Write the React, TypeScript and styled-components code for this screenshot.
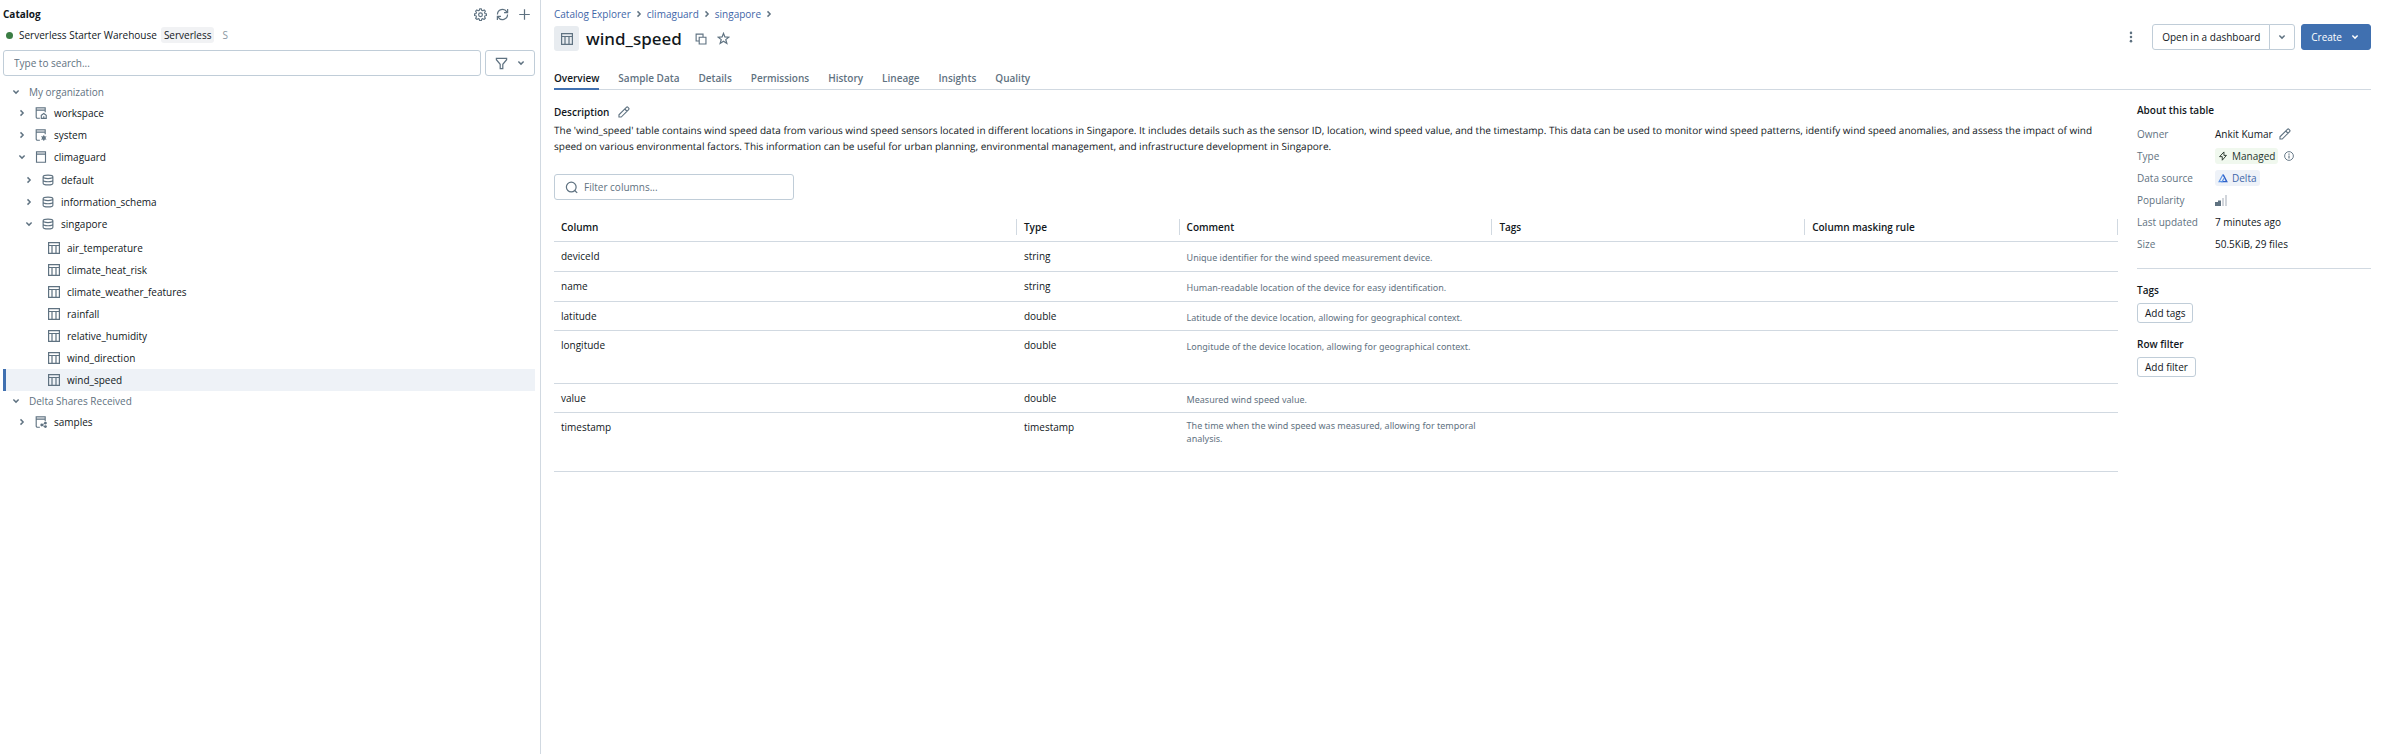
import React from "react";
import styled, { createGlobalStyle } from "styled-components";

const color = {
  text: "#11171c",
  muted: "#5f7281",
  border: "#d1d9e1",
  control: "#c0cdd8",
  blue: "#4070b0",
  link: "#3f66a8",
  selected: "#eef2f7",
};

const GlobalStyle = createGlobalStyle`
  * { box-sizing: border-box; }
  body {
    margin: 0;
    background: #fff;
    color: ${color.text};
    font: 10px/16px "Open Sans", "Noto Sans", sans-serif;
  }
  button, input { font: inherit; color: inherit; }
  ul { list-style: none; margin: 0; padding: 0; }
  h1, h2, p, dl, dd { margin: 0; }
`;

/* ---------- icons ---------- */

const Svg = styled.svg<{ $size?: number }>`
  width: ${(p) => p.$size ?? 12}px;
  height: ${(p) => p.$size ?? 12}px;
  flex: none;
  display: block;
  fill: none;
  stroke: currentColor;
  stroke-width: 1.5;
`;

type IconProps = { size?: number };

const ChevronDown = ({ size = 12 }: IconProps) => (
  <Svg $size={size} viewBox="0 0 16 16" aria-hidden="true">
    <path d="M4.500 6L8 9.500 11.500 6" strokeWidth="1.900" />
  </Svg>
);
const ChevronRight = ({ size = 12 }: IconProps) => (
  <Svg $size={size} viewBox="0 0 16 16" aria-hidden="true">
    <path d="M6 4.500L9.500 8 6 11.500" strokeWidth="1.900" />
  </Svg>
);
const TableIcon = ({ size = 12 }: IconProps) => (
  <Svg $size={size} viewBox="0 0 12 12" aria-hidden="true">
    <path d="M.6.6h10.800v10.800H.6zM.6 3.500h10.800M4 3.500v8M8 3.500v8" strokeWidth="1.200" />
  </Svg>
);
const SchemaIcon = () => (
  <Svg viewBox="0 0 16 16" aria-hidden="true">
    <path d="M1.500 3.800C1.500 2.500 4.400 1.500 8 1.500s6.500 1 6.500 2.300S11.600 6.100 8 6.100 1.500 5.100 1.500 3.800zM1.500 3.800v8.400c0 1.300 2.900 2.300 6.500 2.300s6.500-1 6.500-2.300V3.800M1.500 8c0 1.300 2.900 2.300 6.500 2.300s6.500-1 6.500-2.300" />
  </Svg>
);
const CatalogIcon = () => (
  <Svg viewBox="0 0 16 16" aria-hidden="true">
    <path d="M2.200 2.900h11.600" strokeWidth="2.400" opacity=".35" />
    <path d="M2 1h12v14H2zM2 4.400h12" />
  </Svg>
);
const CatalogOutline = () => (
  <>
    <path d="M1.800 2.900h11.600" strokeWidth="2.400" opacity=".35" />
    <path d="M6.500 15H3.300c-1 0-1.700-.7-1.700-1.700V1h12v6M1.600 4.400h12" />
  </>
);
const CatalogHomeIcon = () => (
  <Svg viewBox="0 0 16 16" aria-hidden="true">
    <CatalogOutline />
    <path d="M8.400 15.200v-4.100l3.300-2.500 3.300 2.500v4.100zM11.700 15v-2.600" />
  </Svg>
);
const CatalogGearIcon = () => (
  <Svg viewBox="0 0 16 16" aria-hidden="true">
    <CatalogOutline />
    <circle cx="11.700" cy="12" r="1.900" />
    <path d="M11.700 8.200v7.600M8.400 10.100l6.600 3.800M8.400 13.900l6.600-3.800" strokeWidth="1.200" />
  </Svg>
);
const CatalogShareIcon = () => (
  <Svg viewBox="0 0 16 16" aria-hidden="true">
    <CatalogOutline />
    <path d="M13.800 9.500L9 12.100l4.800 2.600" strokeWidth="1.200" />
    <g fill="currentColor" strokeWidth="0">
      <circle cx="13.900" cy="9.400" r="1.900" />
      <circle cx="9" cy="12" r="1.900" />
      <circle cx="13.900" cy="14.100" r="1.900" />
    </g>
  </Svg>
);
const GearIcon = () => (
  <Svg $size={13} viewBox="0 0 16 16" aria-hidden="true">
    <path
      strokeLinejoin="round"
      strokeWidth="1.400"
      d="M6.900 1h2.200l.4 1.900 1.300.5 1.700-1 1.500 1.500-1 1.700.5 1.300 1.900.4v1.900l-1.900.4-.5 1.300 1 1.700-1.500 1.500-1.700-1-1.300.5-.4 1.900H6.900l-.4-1.900-1.300-.5-1.700 1L2 12.600l1-1.700-.5-1.300-1.900-.4V7.300l1.900-.4L3 5.600 2 3.900l1.500-1.500 1.700 1 1.300-.5z"
    />
    <circle cx="8" cy="8.200" r="2.300" />
  </Svg>
);
const RefreshIcon = () => (
  <Svg $size={13} viewBox="0 0 16 16" aria-hidden="true">
    <path d="M1.800 8a6.200 6.200 0 0 1 11.500-3.300L14 5.700M14.300 1.300v4.400H9.900M14.200 8a6.200 6.200 0 0 1-11.500 3.300L2 10.300M1.700 14.700v-4.400h4.400" />
  </Svg>
);
const PlusIcon = () => (
  <Svg $size={13} viewBox="0 0 16 16" aria-hidden="true">
    <path d="M8 1.500v13M1.500 8h13" />
  </Svg>
);
const FilterIcon = () => (
  <Svg $size={13} viewBox="0 0 16 16" aria-hidden="true">
    <path d="M1.700 1.700h12.600v1.700L9.600 9v5.300H6.400V9L1.700 3.400z" />
  </Svg>
);
const CopyIcon = () => (
  <Svg viewBox="0 0 16 16" aria-hidden="true">
    <path d="M5.600 10.700H1.500V1.500h9.200v4.100M5.600 5.600h9v9h-9z" />
  </Svg>
);
const StarIcon = () => (
  <Svg $size={13} viewBox="0 0 16 16" aria-hidden="true">
    <path d="M8 1.700l1.700 4.400 4.900.3-3.800 3 1.300 4.700L8 11.400l-4.100 2.700 1.300-4.700-3.800-3 4.900-.3z" />
  </Svg>
);
const PencilIcon = () => (
  <Svg viewBox="0 0 16 16" aria-hidden="true">
    <path d="M1.300 14.700v-3L11.200 1.800a1.500 1.500 0 0 1 2.100 0l.9.900a1.500 1.500 0 0 1 0 2.100L4.300 14.700zM9 4l3 3" />
  </Svg>
);
const SearchIcon = () => (
  <Svg $size={13} viewBox="0 0 16 16" aria-hidden="true">
    <circle cx="7.700" cy="7.500" r="6" />
    <path d="M12 11.700l3 3" />
  </Svg>
);
const KebabIcon = () => (
  <Svg viewBox="0 0 16 16" aria-hidden="true">
    <g fill="currentColor" strokeWidth="0">
      <circle cx="8" cy="2.500" r="1.700" />
      <circle cx="8" cy="8" r="1.700" />
      <circle cx="8" cy="13.500" r="1.700" />
    </g>
  </Svg>
);
const BoltIcon = () => (
  <Svg $size={10} viewBox="0 0 16 16" aria-hidden="true">
    <path d="M9.500 1.500L2.500 9h4.300v5.700L13.500 7H9.500z" strokeLinejoin="round" />
  </Svg>
);
const InfoIcon = () => (
  <Svg $size={10} viewBox="0 0 16 16" aria-hidden="true">
    <circle cx="8" cy="8" r="7" />
    <path d="M8 7v5M8 4v1.800" strokeWidth="1.800" />
  </Svg>
);
const DeltaIcon = () => (
  <Svg $size={10} viewBox="0 0 16 16" aria-hidden="true">
    <path d="M8.200 2.500L14 13.700H5.200" stroke="#2f62c9" strokeWidth="2.200" />
    <path d="M8 2.500L1.800 13.700h4.900L9.600 8.500" stroke="#5b93e6" strokeWidth="1.900" />
  </Svg>
);
const PopularityIcon = () => (
  <Svg $size={12} viewBox="0 0 12 12" role="img" aria-label="Low popularity">
    <g strokeWidth="0">
      <path d="M0 8h3v4H0zM3 6.500h3V12H3z" fill="#5f7281" />
      <path d="M7 4h2v8H7zM10 1h2v11h-2z" fill="#d1d5db" />
    </g>
  </Svg>
);

/* ---------- shared controls ---------- */

const IconButton = styled.button`
  display: flex;
  align-items: center;
  justify-content: center;
  border: 0;
  padding: 0;
  background: none;
  color: ${color.muted};
  cursor: pointer;
`;

const Button = styled.button<{ $primary?: boolean; $small?: boolean }>`
  display: flex;
  align-items: center;
  gap: 7px;
  height: ${(p) => (p.$small ? 20 : 26)}px;
  padding: 0 ${(p) => (p.$small ? 7 : 9)}px;
  border: 1px solid ${(p) => (p.$primary ? color.blue : color.control)};
  border-radius: 3px;
  background: ${(p) => (p.$primary ? color.blue : "#fff")};
  color: ${(p) => (p.$primary ? "#fff" : color.text)};
  cursor: pointer;
`;

const SplitButton = styled.div`
  display: flex;
  button:first-child { border-radius: 3px 0 0 3px; }
  button:last-child {
    margin-left: -1px;
    padding: 0 6px;
    border-radius: 0 3px 3px 0;
    color: ${color.muted};
  }
`;

const Placeholder = `
  &::placeholder { color: ${color.muted}; opacity: 1; }
`;

/* ---------- sidebar ---------- */

const Page = styled.div`
  display: flex;
  min-height: 100vh;
`;

const Sidebar = styled.aside`
  flex: 0 0 541px;
  border-right: 1px solid ${color.border};
  padding: 6px 5px 0 3px;
`;

const SidebarHeader = styled.header`
  display: flex;
  align-items: center;
  justify-content: space-between;
  padding-right: 4px;
`;

const SidebarTitle = styled.h2`
  font-size: 10px;
  font-weight: 700;
`;

const HeaderActions = styled.div`
  display: flex;
  gap: 9px;
`;

const Warehouse = styled.div`
  display: flex;
  align-items: center;
  gap: 4px;
  margin-top: 5px;
  padding-left: 3px;
`;

const StatusDot = styled.span`
  width: 7px;
  height: 7px;
  margin-right: 2px;
  border-radius: 50%;
  background: #3b7d44;
`;

const WarehouseTag = styled.span`
  padding: 0 3px;
  border-radius: 3px;
  background: #f1f2f4;
`;

const WarehouseSize = styled.span`
  margin-left: 4px;
  color: #8a97a2;
`;

const SearchRow = styled.div`
  display: flex;
  gap: 4px;
  margin-top: 7px;
`;

const SearchInput = styled.input`
  flex: 1;
  height: 26px;
  padding: 0 10px;
  border: 1px solid ${color.control};
  border-radius: 3px;
  outline: none;
  ${Placeholder}
`;

const FilterButton = styled(Button)`
  width: 50px;
  justify-content: space-between;
  color: ${color.muted};
`;

const Tree = styled.nav`
  margin-top: 6px;
`;

const SectionRow = styled.button`
  display: flex;
  align-items: center;
  gap: 7px;
  width: 100%;
  height: 20px;
  padding: 0 0 0 7px;
  border: 0;
  background: none;
  color: ${color.muted};
  text-align: left;
`;

const TreeRow = styled.button<{ $indent: number; $selected?: boolean }>`
  display: flex;
  align-items: center;
  gap: 7px;
  width: 100%;
  height: 22px;
  padding: 0 0 0 ${(p) => p.$indent}px;
  border: 0;
  border-left: 3px solid ${(p) => (p.$selected ? color.blue : "transparent")};
  background: ${(p) => (p.$selected ? color.selected : "none")};
  text-align: left;
  svg { color: ${color.muted}; }
`;

const NestedList = styled.ul`
  padding-top: 1px;
  & & { padding-top: 2px; }
`;

const TABLES = [
  "air_temperature",
  "climate_heat_risk",
  "climate_weather_features",
  "rainfall",
  "relative_humidity",
  "wind_direction",
  "wind_speed",
];

const INDENT = { catalog: 10, schema: 17, table: 42 };

function CatalogTree() {
  return (
    <Tree aria-label="Catalogs">
      <SectionRow><ChevronDown />My organization</SectionRow>
      <ul>
        <li><TreeRow $indent={INDENT.catalog}><ChevronRight /><CatalogHomeIcon />workspace</TreeRow></li>
        <li><TreeRow $indent={INDENT.catalog}><ChevronRight /><CatalogGearIcon />system</TreeRow></li>
        <li>
          <TreeRow $indent={INDENT.catalog}><ChevronDown /><CatalogIcon />climaguard</TreeRow>
          <NestedList>
            <li><TreeRow $indent={INDENT.schema}><ChevronRight /><SchemaIcon />default</TreeRow></li>
            <li><TreeRow $indent={INDENT.schema}><ChevronRight /><SchemaIcon />information_schema</TreeRow></li>
            <li>
              <TreeRow $indent={INDENT.schema}><ChevronDown /><SchemaIcon />singapore</TreeRow>
              <NestedList>
                {TABLES.map((name) => (
                  <li key={name}>
                    <TreeRow $indent={INDENT.table} $selected={name === "wind_speed"}>
                      <TableIcon />{name}
                    </TreeRow>
                  </li>
                ))}
              </NestedList>
            </li>
          </NestedList>
        </li>
      </ul>
      <SectionRow><ChevronDown />Delta Shares Received</SectionRow>
      <ul>
        <li><TreeRow $indent={INDENT.catalog}><ChevronRight /><CatalogShareIcon />samples</TreeRow></li>
      </ul>
    </Tree>
  );
}

/* ---------- main area ---------- */

const Main = styled.main`
  flex: 1;
  min-width: 0;
  padding: 6px 12px 0 13px;
`;

const Breadcrumb = styled.nav`
  display: flex;
  align-items: center;
  gap: 2px;
  color: ${color.muted};
  a { color: ${color.link}; text-decoration: none; }
`;

const TitleRow = styled.div`
  display: flex;
  justify-content: space-between;
`;

const TitleGroup = styled.div`
  display: flex;
  align-items: center;
  margin-top: 4px;
`;

const TitleIcon = styled.span`
  display: flex;
  align-items: center;
  justify-content: center;
  width: 25px;
  height: 25px;
  border-radius: 3px;
  background: #e8ecf0;
  color: ${color.muted};
`;

const Title = styled.h1`
  margin: 0 13px 0 7px;
  font-family: "Noto Sans", "Open Sans", sans-serif;
  font-size: 17px;
  line-height: 24px;
  font-weight: 500;
`;

const TitleTools = styled.div`
  display: flex;
  gap: 10px;
`;

const Actions = styled.div`
  display: flex;
  align-items: center;
  gap: 6px;
  height: 26px;
  margin-top: 2px;
`;

const KebabButton = styled(IconButton)`
  margin-right: 9px;
`;

const Tabs = styled.div`
  display: flex;
  gap: 19px;
  margin-top: 18px;
  border-bottom: 1px solid ${color.border};
`;

const Tab = styled.button<{ $active?: boolean }>`
  height: 21px;
  margin-bottom: -1px;
  padding: 0 0 1px;
  border: 0;
  border-bottom: 2px solid ${(p) => (p.$active ? color.blue : "transparent")};
  background: none;
  color: ${(p) => (p.$active ? color.text : color.muted)};
  font-weight: 600;
`;

const Body = styled.div`
  display: flex;
  gap: 19px;
  padding-top: 12px;
`;

const Content = styled.section`
  flex: 1;
  min-width: 0;
`;

const SectionTitle = styled.h2`
  font-size: 10px;
  line-height: 16px;
  font-weight: 600;
`;

const DescriptionHead = styled.div`
  display: flex;
  align-items: center;
  gap: 9px;
  padding-top: 2px;
  margin-bottom: 2px;
`;

const Description = styled.p`
  text-rendering: geometricPrecision;
`;

const FilterBox = styled.label`
  display: flex;
  align-items: center;
  gap: 6px;
  width: 240px;
  height: 26px;
  margin-top: 20px;
  padding: 0 10px;
  border: 1px solid ${color.control};
  border-radius: 3px;
  color: ${color.muted};
`;

const FilterInput = styled.input`
  flex: 1;
  min-width: 0;
  padding: 0;
  border: 0;
  outline: 0;
  background: none;
  ${Placeholder}
`;

const DataTable = styled.table`
  width: 100%;
  margin-top: 11px;
  table-layout: fixed;
  border-collapse: separate;
  border-spacing: 0;
`;

const HeadCell = styled.th<{ $width: string }>`
  width: ${(p) => p.$width};
  padding: 8px 0 6px;
  border-bottom: 1px solid ${color.border};
  text-align: left;
  font-weight: 600;
  span {
    display: block;
    padding-left: 7px;
    border-right: 1px solid ${color.border};
  }
`;

const ROW_HEIGHTS = { normal: 30, compact: 29, tall: 53, wrapped: 59 };

const BodyRow = styled.tr<{ $size: keyof typeof ROW_HEIGHTS }>`
  height: ${(p) => ROW_HEIGHTS[p.$size]}px;
`;

const Cell = styled.td`
  padding: 6px 7px 0;
  border-bottom: 1px solid ${color.border};
  vertical-align: top;
`;

const CommentCell = styled(Cell)<{ $wrapped: boolean }>`
  padding-top: ${(p) => (p.$wrapped ? 6 : 9)}px;
  font-family: "Noto Sans", "Open Sans", sans-serif;
  font-size: 9px;
  line-height: 13px;
  color: ${color.muted};
`;

type Column = { name: string; type: string; comment: string; size: keyof typeof ROW_HEIGHTS };

const COLUMNS: Column[] = [
  { name: "deviceId", type: "string", comment: "Unique identifier for the wind speed measurement device.", size: "normal" },
  { name: "name", type: "string", comment: "Human-readable location of the device for easy identification.", size: "normal" },
  { name: "latitude", type: "double", comment: "Latitude of the device location, allowing for geographical context.", size: "compact" },
  { name: "longitude", type: "double", comment: "Longitude of the device location, allowing for geographical context.", size: "tall" },
  { name: "value", type: "double", comment: "Measured wind speed value.", size: "compact" },
  { name: "timestamp", type: "timestamp", comment: "The time when the wind speed was measured, allowing for temporal analysis.", size: "wrapped" },
];

const HEADINGS: [string, string][] = [
  ["Column", "29.6%"],
  ["Type", "10.4%"],
  ["Comment", "20%"],
  ["Tags", "20%"],
  ["Column masking rule", "20%"],
];

/* ---------- details panel ---------- */

const Details = styled.aside`
  flex: 0 0 234px;
`;

const Facts = styled.dl`
  display: grid;
  grid-template-columns: 78px 1fr;
  grid-auto-rows: 16px;
  row-gap: 6px;
  margin-top: 8px;
  padding-bottom: 16px;
  border-bottom: 1px solid ${color.border};
  dt { color: ${color.muted}; }
  dd { display: flex; align-items: center; gap: 6px; }
`;

const Tag = styled.span<{ $tone: "green" | "blue" }>`
  display: flex;
  align-items: center;
  gap: 4px;
  padding: 0 3px;
  border-radius: 3px;
  background: ${(p) => (p.$tone === "green" ? "#f0f8ee" : "#eef2f8")};
  color: ${(p) => (p.$tone === "green" ? "#26352c" : color.link)};
`;

const DetailGroup = styled.div`
  display: flex;
  flex-direction: column;
  align-items: flex-start;
  gap: 5px;
  margin-top: 13px;
`;

export default function App() {
  return (
    <>
      <GlobalStyle />
      <Page>
        <Sidebar>
          <SidebarHeader>
            <SidebarTitle>Catalog</SidebarTitle>
            <HeaderActions>
              <IconButton aria-label="Settings"><GearIcon /></IconButton>
              <IconButton aria-label="Refresh"><RefreshIcon /></IconButton>
              <IconButton aria-label="Add"><PlusIcon /></IconButton>
            </HeaderActions>
          </SidebarHeader>
          <Warehouse>
            <StatusDot />
            <span>Serverless Starter Warehouse</span>
            <WarehouseTag>Serverless</WarehouseTag>
            <WarehouseSize>S</WarehouseSize>
          </Warehouse>
          <SearchRow>
            <SearchInput aria-label="Search catalogs" placeholder="Type to search..." />
            <FilterButton aria-label="Filter"><FilterIcon /><ChevronDown /></FilterButton>
          </SearchRow>
          <CatalogTree />
        </Sidebar>

        <Main>
          <Breadcrumb aria-label="Breadcrumb">
            <a href="#explorer">Catalog Explorer</a><ChevronRight />
            <a href="#climaguard">climaguard</a><ChevronRight />
            <a href="#singapore">singapore</a><ChevronRight />
          </Breadcrumb>
          <TitleRow>
            <TitleGroup>
              <TitleIcon><TableIcon /></TitleIcon>
              <Title>wind_speed</Title>
              <TitleTools>
                <IconButton aria-label="Copy name"><CopyIcon /></IconButton>
                <IconButton aria-label="Add to favorites"><StarIcon /></IconButton>
              </TitleTools>
            </TitleGroup>
            <Actions>
              <KebabButton aria-label="More actions"><KebabIcon /></KebabButton>
              <SplitButton>
                <Button>Open in a dashboard</Button>
                <Button aria-label="More open options"><ChevronDown /></Button>
              </SplitButton>
              <Button $primary>Create<ChevronDown /></Button>
            </Actions>
          </TitleRow>
          <Tabs role="tablist">
            {["Overview", "Sample Data", "Details", "Permissions", "History", "Lineage", "Insights", "Quality"].map(
              (label, i) => (
                <Tab key={label} role="tab" aria-selected={i === 0} $active={i === 0}>{label}</Tab>
              ),
            )}
          </Tabs>

          <Body>
            <Content>
              <DescriptionHead>
                <SectionTitle>Description</SectionTitle>
                <IconButton aria-label="Edit description"><PencilIcon /></IconButton>
              </DescriptionHead>
              <Description>
                The 'wind_speed' table contains wind speed data from various wind speed sensors located in
                different locations in Singapore. It includes details such as the sensor ID, location, wind speed
                value, and the timestamp. This data can be used to monitor wind speed patterns, identify wind
                speed anomalies, and assess the impact of wind speed on various environmental factors. This
                information can be useful for urban planning, environmental management, and infrastructure
                development in Singapore.
              </Description>
              <FilterBox>
                <SearchIcon />
                <FilterInput aria-label="Filter columns" placeholder="Filter columns..." />
              </FilterBox>
              <DataTable>
                <thead>
                  <tr>
                    {HEADINGS.map(([label, width]) => (
                      <HeadCell key={label} $width={width} scope="col"><span>{label}</span></HeadCell>
                    ))}
                  </tr>
                </thead>
                <tbody>
                  {COLUMNS.map((c) => (
                    <BodyRow key={c.name} $size={c.size}>
                      <Cell>{c.name}</Cell>
                      <Cell>{c.type}</Cell>
                      <CommentCell $wrapped={c.size === "wrapped"}>{c.comment}</CommentCell>
                      <Cell />
                      <Cell />
                    </BodyRow>
                  ))}
                </tbody>
              </DataTable>
            </Content>

            <Details>
              <SectionTitle>About this table</SectionTitle>
              <Facts>
                <dt>Owner</dt>
                <dd>Ankit Kumar<IconButton aria-label="Edit owner"><PencilIcon /></IconButton></dd>
                <dt>Type</dt>
                <dd><Tag $tone="green"><BoltIcon />Managed</Tag><IconButton aria-label="About managed tables"><InfoIcon /></IconButton></dd>
                <dt>Data source</dt>
                <dd><Tag $tone="blue"><DeltaIcon />Delta</Tag></dd>
                <dt>Popularity</dt>
                <dd><PopularityIcon /></dd>
                <dt>Last updated</dt>
                <dd>7 minutes ago</dd>
                <dt>Size</dt>
                <dd>50.5KiB, 29 files</dd>
              </Facts>
              <DetailGroup>
                <SectionTitle>Tags</SectionTitle>
                <Button $small>Add tags</Button>
              </DetailGroup>
              <DetailGroup>
                <SectionTitle>Row filter</SectionTitle>
                <Button $small>Add filter</Button>
              </DetailGroup>
            </Details>
          </Body>
        </Main>
      </Page>
    </>
  );
}
